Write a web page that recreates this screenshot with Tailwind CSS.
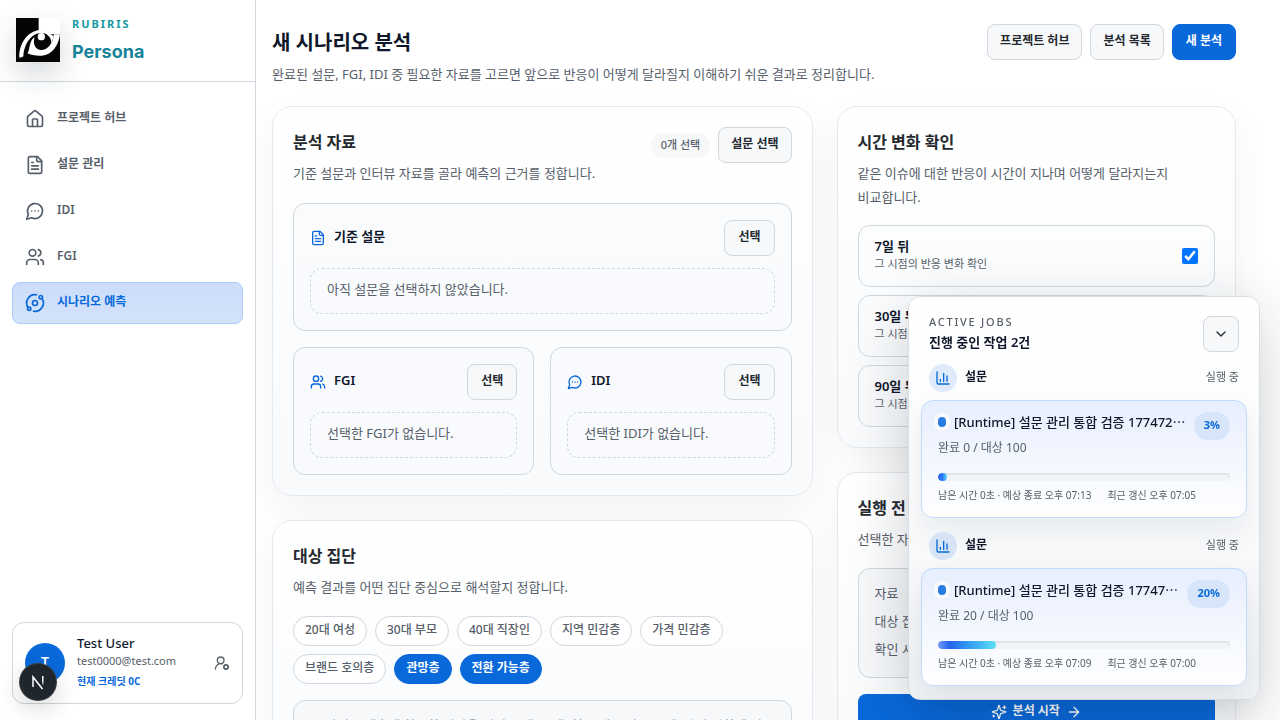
<!DOCTYPE html>
<html lang="ko">

<head>
  <meta charset="UTF-8">
  <meta name="viewport" content="width=device-width, initial-scale=1">
  <title>Rubiris Persona</title>
  <script src="https://cdn.jsdelivr.net/npm/@tailwindcss/browser@4"></script>
</head>

<body class="h-screen overflow-hidden bg-white text-[#24292f] font-['Noto_Sans','Noto_Sans_CJK_KR',sans-serif]">
  <!-- Icons -->
  <svg class="hidden" xmlns="http://www.w3.org/2000/svg">
    <symbol id="i-home" viewBox="0 0 24 24"><path d="M15 21v-8a1 1 0 0 0-1-1h-4a1 1 0 0 0-1 1v8"/><path d="M3 10a2 2 0 0 1 .709-1.528l7-6a2 2 0 0 1 2.582 0l7 6A2 2 0 0 1 21 10v9a2 2 0 0 1-2 2H5a2 2 0 0 1-2-2z"/></symbol>
    <symbol id="i-file" viewBox="0 0 24 24"><path d="M15 2H6a2 2 0 0 0-2 2v16a2 2 0 0 0 2 2h12a2 2 0 0 0 2-2V7Z"/><path d="M14 2v4a2 2 0 0 0 2 2h4"/><path d="M10 9H8M16 13H8M16 17H8"/></symbol>
    <symbol id="i-chat" viewBox="0 0 24 24"><path d="M7.9 20A9 9 0 1 0 4 16.1L2 22Z"/><path d="M8 12h.01M12 12h.01M16 12h.01"/></symbol>
    <symbol id="i-users" viewBox="0 0 24 24"><path d="M16 21v-2a4 4 0 0 0-4-4H6a4 4 0 0 0-4 4v2"/><circle cx="9" cy="7" r="4"/><path d="M22 21v-2a4 4 0 0 0-3-3.87M16 3.13a4 4 0 0 1 0 7.75"/></symbol>
    <symbol id="i-orbit" viewBox="0 0 24 24"><path d="M20.341 6.484A10 10 0 0 1 10.266 21.85M3.659 17.516A10 10 0 0 1 13.74 2.152"/><circle cx="12" cy="12" r="3"/><circle cx="19" cy="5" r="2"/><circle cx="5" cy="19" r="2"/></symbol>
    <symbol id="i-chart" viewBox="0 0 24 24"><path d="M3 3v16a2 2 0 0 0 2 2h16M18 17V9M13 17V5M8 17v-3"/></symbol>
    <symbol id="i-down" viewBox="0 0 24 24"><path d="m6 9 6 6 6-6"/></symbol>
    <symbol id="i-right" viewBox="0 0 24 24"><path d="M5 12h14M12 5l7 7-7 7"/></symbol>
    <symbol id="i-spark" viewBox="0 0 24 24"><path d="M9.937 15.5A2 2 0 0 0 8.5 14.063l-6.135-1.582a.5.5 0 0 1 0-.962L8.5 9.936A2 2 0 0 0 9.937 8.5l1.582-6.135a.5.5 0 0 1 .963 0L14.063 8.5A2 2 0 0 0 15.5 9.937l6.135 1.581a.5.5 0 0 1 0 .964L15.5 14.063a2 2 0 0 0-1.437 1.437l-1.582 6.135a.5.5 0 0 1-.963 0z"/><path d="M20 3v4M22 5h-4M4 17v2M5 18H3"/></symbol>
    <symbol id="i-usercog" viewBox="0 0 24 24"><path d="M2 21a8 8 0 0 1 10.434-7.62"/><circle cx="10" cy="8" r="5"/><circle cx="18" cy="18" r="3"/><path d="m19.5 14.3-.4.9M16.9 20.8l-.3.9M21.7 19.4l-.9-.3M15.2 16.9l-.9-.3M16.6 14.3l.3.9M19.1 20.8l.4.9M14.3 19.5l.9-.4M20.8 16.9l.9-.3"/></symbol>
  </svg>

  <div class="flex h-full">
    <!-- Sidebar -->
    <aside class="flex w-64 shrink-0 flex-col border-r border-[#d0d7de]">
      <div class="flex h-[82px] items-center gap-3 border-b border-[#d0d7de] px-4 pb-0.5">
        <svg class="size-11 shadow-[0_12px_30px_rgba(31,50,70,0.2)]" viewBox="0 0 132 132" role="img" aria-label="Rubiris">
          <path fill="#050505" d="M0 0h132v132H0z"/>
          <path fill="#fff" d="M68 0h64v49h-30C94 41 82 36 68 37z"/>
          <path fill="#fff" d="M10 119C8 80 32 38 76 35c10 0 20 4 26 12l-6 4C88 44 74 43 62 47 38 56 23 86 22 115c-4 3-8 4-12 4z"/>
          <path fill="#fff" d="M34 106c8-8 4-28 16-44l6-4c-6 18 0 36 18 38 20 1 36-16 40-47h18c-4 36-26 62-54 64-18 1-34-2-44-7z"/>
          <path fill="#fff" d="M94 44c8 3 16 8 20 10l-8 22c0-12-4-20-12-25z"/>
          <circle cx="76" cy="56" r="11" fill="#fff"/>
        </svg>
        <div>
          <p class="text-[11px] leading-4 font-bold tracking-[0.18em] text-[#159aa3]">RUBIRIS</p>
          <p class="mt-2 font-['Inter'] text-lg leading-6 font-bold text-[#16839a]">Persona</p>
        </div>
      </div>

      <nav class="flex flex-col gap-1 px-3 pt-4 text-[12px] font-semibold text-[#57606a]">
        <a href="#" class="flex h-[42px] items-center gap-3 rounded-lg border border-transparent px-3">
          <svg class="size-5 fill-none stroke-current stroke-2" stroke-linecap="round" stroke-linejoin="round"><use href="#i-home"/></svg>
          <span class="pb-0.5">프로젝트 허브</span>
        </a>
        <a href="#" class="flex h-[42px] items-center gap-3 rounded-lg border border-transparent px-3">
          <svg class="size-5 fill-none stroke-current stroke-2" stroke-linecap="round" stroke-linejoin="round"><use href="#i-file"/></svg>
          <span class="pb-0.5">설문 관리</span>
        </a>
        <a href="#" class="flex h-[42px] items-center gap-3 rounded-lg border border-transparent px-3">
          <svg class="size-5 fill-none stroke-current stroke-2" stroke-linecap="round" stroke-linejoin="round"><use href="#i-chat"/></svg>
          <span class="pb-0.5">IDI</span>
        </a>
        <a href="#" class="flex h-[42px] items-center gap-3 rounded-lg border border-transparent px-3">
          <svg class="size-5 fill-none stroke-current stroke-2" stroke-linecap="round" stroke-linejoin="round"><use href="#i-users"/></svg>
          <span class="pb-0.5">FGI</span>
        </a>
        <a href="#" aria-current="page" class="flex h-[42px] items-center gap-3 rounded-lg border border-[#a8cbf7] bg-linear-to-b from-[#cbddfa] to-[#d4e3fb] px-3 text-[#0969da]">
          <svg class="size-5 fill-none stroke-current stroke-2" stroke-linecap="round" stroke-linejoin="round"><use href="#i-orbit"/></svg>
          <span class="pb-0.5">시나리오 예측</span>
        </a>
      </nav>

      <div class="mx-3 mt-auto mb-4 flex h-[82px] items-center gap-3 rounded-xl border border-[#d0d7de] px-3">
        <span class="flex size-10 shrink-0 items-center justify-center rounded-full bg-[#0969da] pb-0.5 text-sm font-semibold text-white">T</span>
        <div class="min-w-0 flex-1 pb-1">
          <p class="text-[13px] leading-5 font-medium text-[#0f172a]">Test User</p>
          <p class="text-[11px] leading-4 text-[#57606a]">test0000@test.com</p>
          <p class="mt-1 text-[10px] leading-4 font-bold text-[#0969da]">현재 크레딧 0C</p>
        </div>
        <button aria-label="계정 설정" class="text-[#57606a]">
          <svg class="size-4 fill-none stroke-current stroke-2" stroke-linecap="round" stroke-linejoin="round"><use href="#i-usercog"/></svg>
        </button>
      </div>
    </aside>

    <!-- Main -->
    <main class="min-w-0 flex-1 overflow-y-auto pt-6 pr-11 pl-4 [scrollbar-width:none]">
      <header class="flex items-start justify-between">
        <div>
          <h1 class="text-xl leading-[38px] font-bold text-[#0f172a]">새 시나리오 분석</h1>
          <p class="text-[13px] leading-6 text-[#57606a]">완료된 설문, FGI, IDI 중 필요한 자료를 고르면 앞으로 반응이 어떻게 달라질지 이해하기 쉬운 결과로 정리합니다.</p>
        </div>
        <div class="flex shrink-0 gap-2 text-[12px] font-semibold">
          <button class="h-9 rounded-lg border border-[#d0d7de] bg-[#f6f8fa] px-3 pb-0.5">프로젝트 허브</button>
          <button class="h-9 rounded-lg border border-[#d0d7de] bg-[#f6f8fa] px-3 pb-0.5">분석 목록</button>
          <button class="h-9 rounded-lg border border-[#0969da] bg-[#0969da] px-[13px] pb-0.5 text-white">새 분석</button>
        </div>
      </header>

      <div class="mt-5 grid grid-cols-[minmax(0,1.15fr)_minmax(0,0.85fr)] items-start gap-6">
        <div class="flex flex-col gap-6">
          <section class="rounded-[20px] border border-[#e4e8f0] bg-linear-to-b from-white to-[#f8fafc] p-5 shadow-[0_16px_40px_rgba(15,23,42,0.05)]">
            <div class="flex items-start justify-between">
              <div>
                <h2 class="text-base leading-[30px] font-bold">분석 자료</h2>
                <p class="mt-1 text-[13px] leading-6 text-[#57606a]">기준 설문과 인터뷰 자료를 골라 예측의 근거를 정합니다.</p>
              </div>
              <div class="flex items-center gap-2">
                <span class="rounded-full bg-[#f6f8fa] px-2.5 pt-1 pb-[5px] text-[11px] leading-4 font-medium text-[#57606a]">0개 선택</span>
                <button class="h-9 rounded-lg border border-[#d0d7de] bg-[#f6f8fa] px-3 pb-0.5 text-[12px] font-semibold">설문 선택</button>
              </div>
            </div>

            <div class="mt-[18px] grid grid-cols-2 gap-4">
              <div class="col-span-2 rounded-xl border border-[#d0d7de] bg-[#f8fafc]/70 p-4">
                <div class="flex items-center gap-2">
                  <svg class="size-4 fill-none stroke-[#0969da] stroke-2" stroke-linecap="round" stroke-linejoin="round"><use href="#i-file"/></svg>
                  <h3 class="pb-1 text-[13px] leading-5 font-semibold text-[#0f172a]">기준 설문</h3>
                  <button class="ml-auto h-9 rounded-lg border border-[#d0d7de] bg-[#f6f8fa] px-[13px] pb-0.5 text-[12px] font-semibold">선택</button>
                </div>
                <p class="mt-3 rounded-xl border border-dashed border-[#d0d7de] px-4 pt-2 pb-3 text-[13px] leading-6 text-[#57606a]">아직 설문을 선택하지 않았습니다.</p>
              </div>
              <div class="rounded-xl border border-[#d0d7de] bg-[#f8fafc]/70 p-4">
                <div class="flex items-center gap-2">
                  <svg class="size-4 fill-none stroke-[#0969da] stroke-2" stroke-linecap="round" stroke-linejoin="round"><use href="#i-users"/></svg>
                  <h3 class="pb-1 text-[13px] leading-5 font-semibold text-[#0f172a]">FGI</h3>
                  <button class="ml-auto h-9 rounded-lg border border-[#d0d7de] bg-[#f6f8fa] px-[13px] pb-0.5 text-[12px] font-semibold">선택</button>
                </div>
                <p class="mt-3 rounded-xl border border-dashed border-[#d0d7de] px-4 pt-2 pb-3 text-[13px] leading-6 text-[#57606a]">선택한 FGI가 없습니다.</p>
              </div>
              <div class="rounded-xl border border-[#d0d7de] bg-[#f8fafc]/70 p-4">
                <div class="flex items-center gap-2">
                  <svg class="size-4 fill-none stroke-[#0969da] stroke-2" stroke-linecap="round" stroke-linejoin="round"><use href="#i-chat"/></svg>
                  <h3 class="pb-1 text-[13px] leading-5 font-semibold text-[#0f172a]">IDI</h3>
                  <button class="ml-auto h-9 rounded-lg border border-[#d0d7de] bg-[#f6f8fa] px-[13px] pb-0.5 text-[12px] font-semibold">선택</button>
                </div>
                <p class="mt-3 rounded-xl border border-dashed border-[#d0d7de] px-4 pt-2 pb-3 text-[13px] leading-6 text-[#57606a]">선택한 IDI가 없습니다.</p>
              </div>
            </div>
          </section>

          <section class="rounded-[20px] border border-[#e4e8f0] bg-linear-to-b from-white to-[#f8fafc] p-5 shadow-[0_16px_40px_rgba(15,23,42,0.05)]">
            <h2 class="text-base leading-[30px] font-bold">대상 집단</h2>
            <p class="mt-1 text-[13px] leading-6 text-[#57606a]">예측 결과를 어떤 집단 중심으로 해석할지 정합니다.</p>
            <div class="mt-[17px] flex flex-wrap gap-2 text-[12px] font-medium text-[#57606a]">
              <button class="h-[30px] rounded-full border border-[#d0d7de] bg-white px-[11px] pb-0.5">20대 여성</button>
              <button class="h-[30px] rounded-full border border-[#d0d7de] bg-white px-[11px] pb-0.5">30대 부모</button>
              <button class="h-[30px] rounded-full border border-[#d0d7de] bg-white px-[11px] pb-0.5">40대 직장인</button>
              <button class="h-[30px] rounded-full border border-[#d0d7de] bg-white px-[11px] pb-0.5">지역 민감층</button>
              <button class="h-[30px] rounded-full border border-[#d0d7de] bg-white px-[11px] pb-0.5">가격 민감층</button>
              <button class="h-[30px] rounded-full border border-[#d0d7de] bg-white px-[11px] pb-0.5">브랜드 호의층</button>
              <button class="h-[30px] rounded-full border border-[#0969da] bg-[#0969da] px-[11px] pb-0.5 font-bold text-white">관망층</button>
              <button class="h-[30px] rounded-full border border-[#0969da] bg-[#0969da] px-[11px] pb-0.5 font-bold text-white">전환 가능층</button>
            </div>
            <textarea aria-label="대상 집단 설명" rows="4" placeholder="시나리오 예측에 참고할 집단을 적어 주세요. 예: 첫 구매를 앞둔 고객, 가격 변화에 민감한 분" class="mt-4 block w-full resize-none rounded-xl border border-[#d0d7de] bg-[#f6f8fa] px-[19px] py-3 text-[13px] leading-6 placeholder:text-[#8c959f]"></textarea>
          </section>
        </div>

        <div class="flex flex-col gap-6">
          <section class="rounded-[20px] border border-[#e4e8f0] bg-linear-to-b from-white to-[#f8fafc] p-5 shadow-[0_16px_40px_rgba(15,23,42,0.05)]">
            <h2 class="text-base leading-[30px] font-bold">시간 변화 확인</h2>
            <p class="mt-1 text-[13px] leading-6 text-[#57606a]">같은 이슈에 대한 반응이 시간이 지나며 어떻게 달라지는지<br>비교합니다.</p>
            <div class="mt-4 flex flex-col gap-2">
              <label class="flex h-[62px] items-center justify-between rounded-xl border border-[#d0d7de] px-4">
                <span class="pb-1">
                  <span class="block text-[13px] leading-5 font-semibold text-[#0f172a]">7일 뒤</span>
                  <span class="block text-[11px] leading-4 text-[#57606a]">그 시점의 반응 변화 확인</span>
                </span>
                <input type="checkbox" checked class="size-4 accent-[#0075ff]">
              </label>
              <label class="flex h-[62px] items-center justify-between rounded-xl border border-[#d0d7de] px-4">
                <span class="pb-1">
                  <span class="block text-[13px] leading-5 font-semibold text-[#0f172a]">30일 뒤</span>
                  <span class="block text-[11px] leading-4 text-[#57606a]">그 시점의 반응 변화 확인</span>
                </span>
                <input type="checkbox" checked class="size-4 accent-[#0075ff]">
              </label>
              <label class="flex h-[62px] items-center justify-between rounded-xl border border-[#d0d7de] px-4">
                <span class="pb-1">
                  <span class="block text-[13px] leading-5 font-semibold text-[#0f172a]">90일 뒤</span>
                  <span class="block text-[11px] leading-4 text-[#57606a]">그 시점의 반응 변화 확인</span>
                </span>
                <input type="checkbox" checked class="size-4 accent-[#0075ff]">
              </label>
            </div>
          </section>

          <section class="rounded-[20px] border border-[#e4e8f0] bg-linear-to-b from-white to-[#f8fafc] p-5 shadow-[0_16px_40px_rgba(15,23,42,0.05)]">
            <h2 class="text-base leading-[30px] font-bold">실행 전 확인</h2>
            <p class="mt-1 text-[13px] leading-6 text-[#57606a]">선택한 자료와 조건을 확인합니다.</p>
            <dl class="mt-[17px] flex flex-col gap-1 rounded-xl border border-[#d0d7de] bg-[#f6f8fa] px-4 pt-3 pb-4 text-[13px] leading-6 text-[#57606a]">
              <div class="flex justify-between"><dt>자료</dt><dd>0개</dd></div>
              <div class="flex justify-between"><dt>대상 집단</dt><dd>2개</dd></div>
              <div class="flex justify-between"><dt>확인 시점</dt><dd>3개</dd></div>
            </dl>
            <button class="mt-4 flex h-9 w-full items-center justify-center gap-1.5 rounded-lg bg-[#0969da] text-[12px] font-semibold text-white">
              <svg class="size-4 fill-none stroke-current stroke-2" stroke-linecap="round" stroke-linejoin="round"><use href="#i-spark"/></svg>
              <span class="pb-0.5">분석 시작</span>
              <svg class="size-4 fill-none stroke-current stroke-2" stroke-linecap="round" stroke-linejoin="round"><use href="#i-right"/></svg>
            </button>
          </section>
        </div>
      </div>
    </main>
  </div>

  <!-- Active jobs -->
  <aside class="fixed right-5 bottom-5 w-[352px] rounded-xl border border-[#d8dee4] bg-linear-to-b from-white via-[#fbfcfd] to-[#eff2f6] px-5 pt-[19px] pb-[13px] shadow-[0_16px_60px_rgba(15,23,42,0.2)]">
    <div class="flex items-start justify-between">
      <div>
        <p class="text-[11px] leading-3 font-medium tracking-[0.16em] text-[#57606a]">ACTIVE JOBS</p>
        <p class="mt-1 text-[13px] leading-5 font-semibold text-[#0f172a]">진행 중인 작업 2건</p>
      </div>
      <button aria-label="작업 목록 접기" class="flex size-9 items-center justify-center rounded-lg border border-[#d0d7de] bg-[#f6f8fa]">
        <svg class="size-4 fill-none stroke-current stroke-2" stroke-linecap="round" stroke-linejoin="round"><use href="#i-down"/></svg>
      </button>
    </div>

    <section>
      <div class="mt-3 flex items-center gap-2">
        <span class="flex size-7 items-center justify-center rounded-full bg-[#dfebfa] text-[#0969da]">
          <svg class="size-4 fill-none stroke-current stroke-2" stroke-linecap="round" stroke-linejoin="round"><use href="#i-chart"/></svg>
        </span>
        <h3 class="pb-0.5 text-[12px] leading-4 font-semibold text-[#0f172a]">설문</h3>
        <span class="ml-auto pb-0.5 text-[11px] leading-4 text-[#57606a]">실행 중</span>
      </div>
      <article class="-mx-2 mt-2 rounded-xl border border-[#c0dafa] bg-linear-to-b from-[#e7eefd] to-white px-4 pt-[11px] pb-3 shadow-[0_12px_30px_rgba(15,23,42,0.08)]">
        <div class="flex items-start justify-between">
          <div>
            <div class="flex items-center gap-2">
              <span class="h-2.5 w-2 rounded-full bg-[#2a7de1] ring-4 ring-white/70"></span>
              <p class="text-[13px] leading-5 font-medium whitespace-nowrap text-[#0f172a]">[Runtime] 설문 관리 통합 검증 177472⋯</p>
            </div>
            <p class="mt-1.5 text-[12px] leading-5 text-[#57606a]">완료 0 / 대상 100</p>
          </div>
          <span class="rounded-full bg-[#d6e5fa] px-2.5 pt-[5px] pb-[7px] text-[11px] leading-4 font-bold text-[#0969da]">3%</span>
        </div>
        <div role="progressbar" aria-valuenow="3" class="mt-[15px] h-2 overflow-hidden rounded-full bg-[#f1f3f6] inset-shadow-[0_1px_2px_rgba(15,23,42,0.14)]">
          <div class="h-full rounded-full bg-linear-to-r from-[#2563eb] via-[#2f7bff] to-[#5fd9f5]" style="width: 3%"></div>
        </div>
        <p class="mt-1 flex gap-4 text-[10px] leading-5 text-[#57606a]"><span>남은 시간 0초 · 예상 종료 오후 07:13</span><span>최근 갱신 오후 07:05</span></p>
      </article>
    </section>

    <section>
      <div class="mt-3.5 flex items-center gap-2">
        <span class="flex size-7 items-center justify-center rounded-full bg-[#d6e4f6] text-[#0969da]">
          <svg class="size-4 fill-none stroke-current stroke-2" stroke-linecap="round" stroke-linejoin="round"><use href="#i-chart"/></svg>
        </span>
        <h3 class="pb-0.5 text-[12px] leading-4 font-semibold text-[#0f172a]">설문</h3>
        <span class="ml-auto pb-0.5 text-[11px] leading-4 text-[#57606a]">실행 중</span>
      </div>
      <article class="-mx-2 mt-2 rounded-xl border border-[#c0dafa] bg-linear-to-b from-[#e7eefd] to-white px-4 pt-[11px] pb-3 shadow-[0_12px_30px_rgba(15,23,42,0.08)]">
        <div class="flex items-start justify-between">
          <div>
            <div class="flex items-center gap-2">
              <span class="h-2.5 w-2 rounded-full bg-[#2a7de1] ring-4 ring-white/70"></span>
              <p class="text-[13px] leading-5 font-medium whitespace-nowrap text-[#0f172a]">[Runtime] 설문 관리 통합 검증 17747⋯</p>
            </div>
            <p class="mt-1.5 text-[12px] leading-5 text-[#57606a]">완료 20 / 대상 100</p>
          </div>
          <span class="rounded-full bg-[#d6e5fa] px-2.5 pt-[5px] pb-[7px] text-[11px] leading-4 font-bold text-[#0969da]">20%</span>
        </div>
        <div role="progressbar" aria-valuenow="20" class="mt-[15px] h-2 overflow-hidden rounded-full bg-[#f1f3f6] inset-shadow-[0_1px_2px_rgba(15,23,42,0.14)]">
          <div class="h-full rounded-full bg-linear-to-r from-[#6f9bf8] via-[#2563eb] via-20% to-[#5fe0f5]" style="width: 20%"></div>
        </div>
        <p class="mt-1 flex gap-4 text-[10px] leading-5 text-[#57606a]"><span>남은 시간 0초 · 예상 종료 오후 07:09</span><span>최근 갱신 오후 07:00</span></p>
      </article>
    </section>
  </aside>

  <!-- Dev tools badge -->
  <button aria-label="Next.js" class="fixed bottom-5 left-5 flex size-9 items-center justify-center rounded-full bg-[#1f262d] ring-1 ring-[#3d4043] shadow-[0_8px_24px_rgba(0,0,0,0.18)]">
    <svg class="size-5 fill-none" viewBox="0 0 20 20">
      <defs><linearGradient id="nfade" x1="0" y1="4" x2="0" y2="15" gradientUnits="userSpaceOnUse"><stop offset=".4" stop-color="#fff"/><stop offset="1" stop-color="#fff" stop-opacity="0"/></linearGradient></defs>
      <path d="M5 15V5l9.500 12" stroke="#fff" stroke-width="1.500"/>
      <path d="M14.800 4v9" stroke="url(#nfade)" stroke-width="1.500"/>
    </svg>
  </button>
</body>

</html>
